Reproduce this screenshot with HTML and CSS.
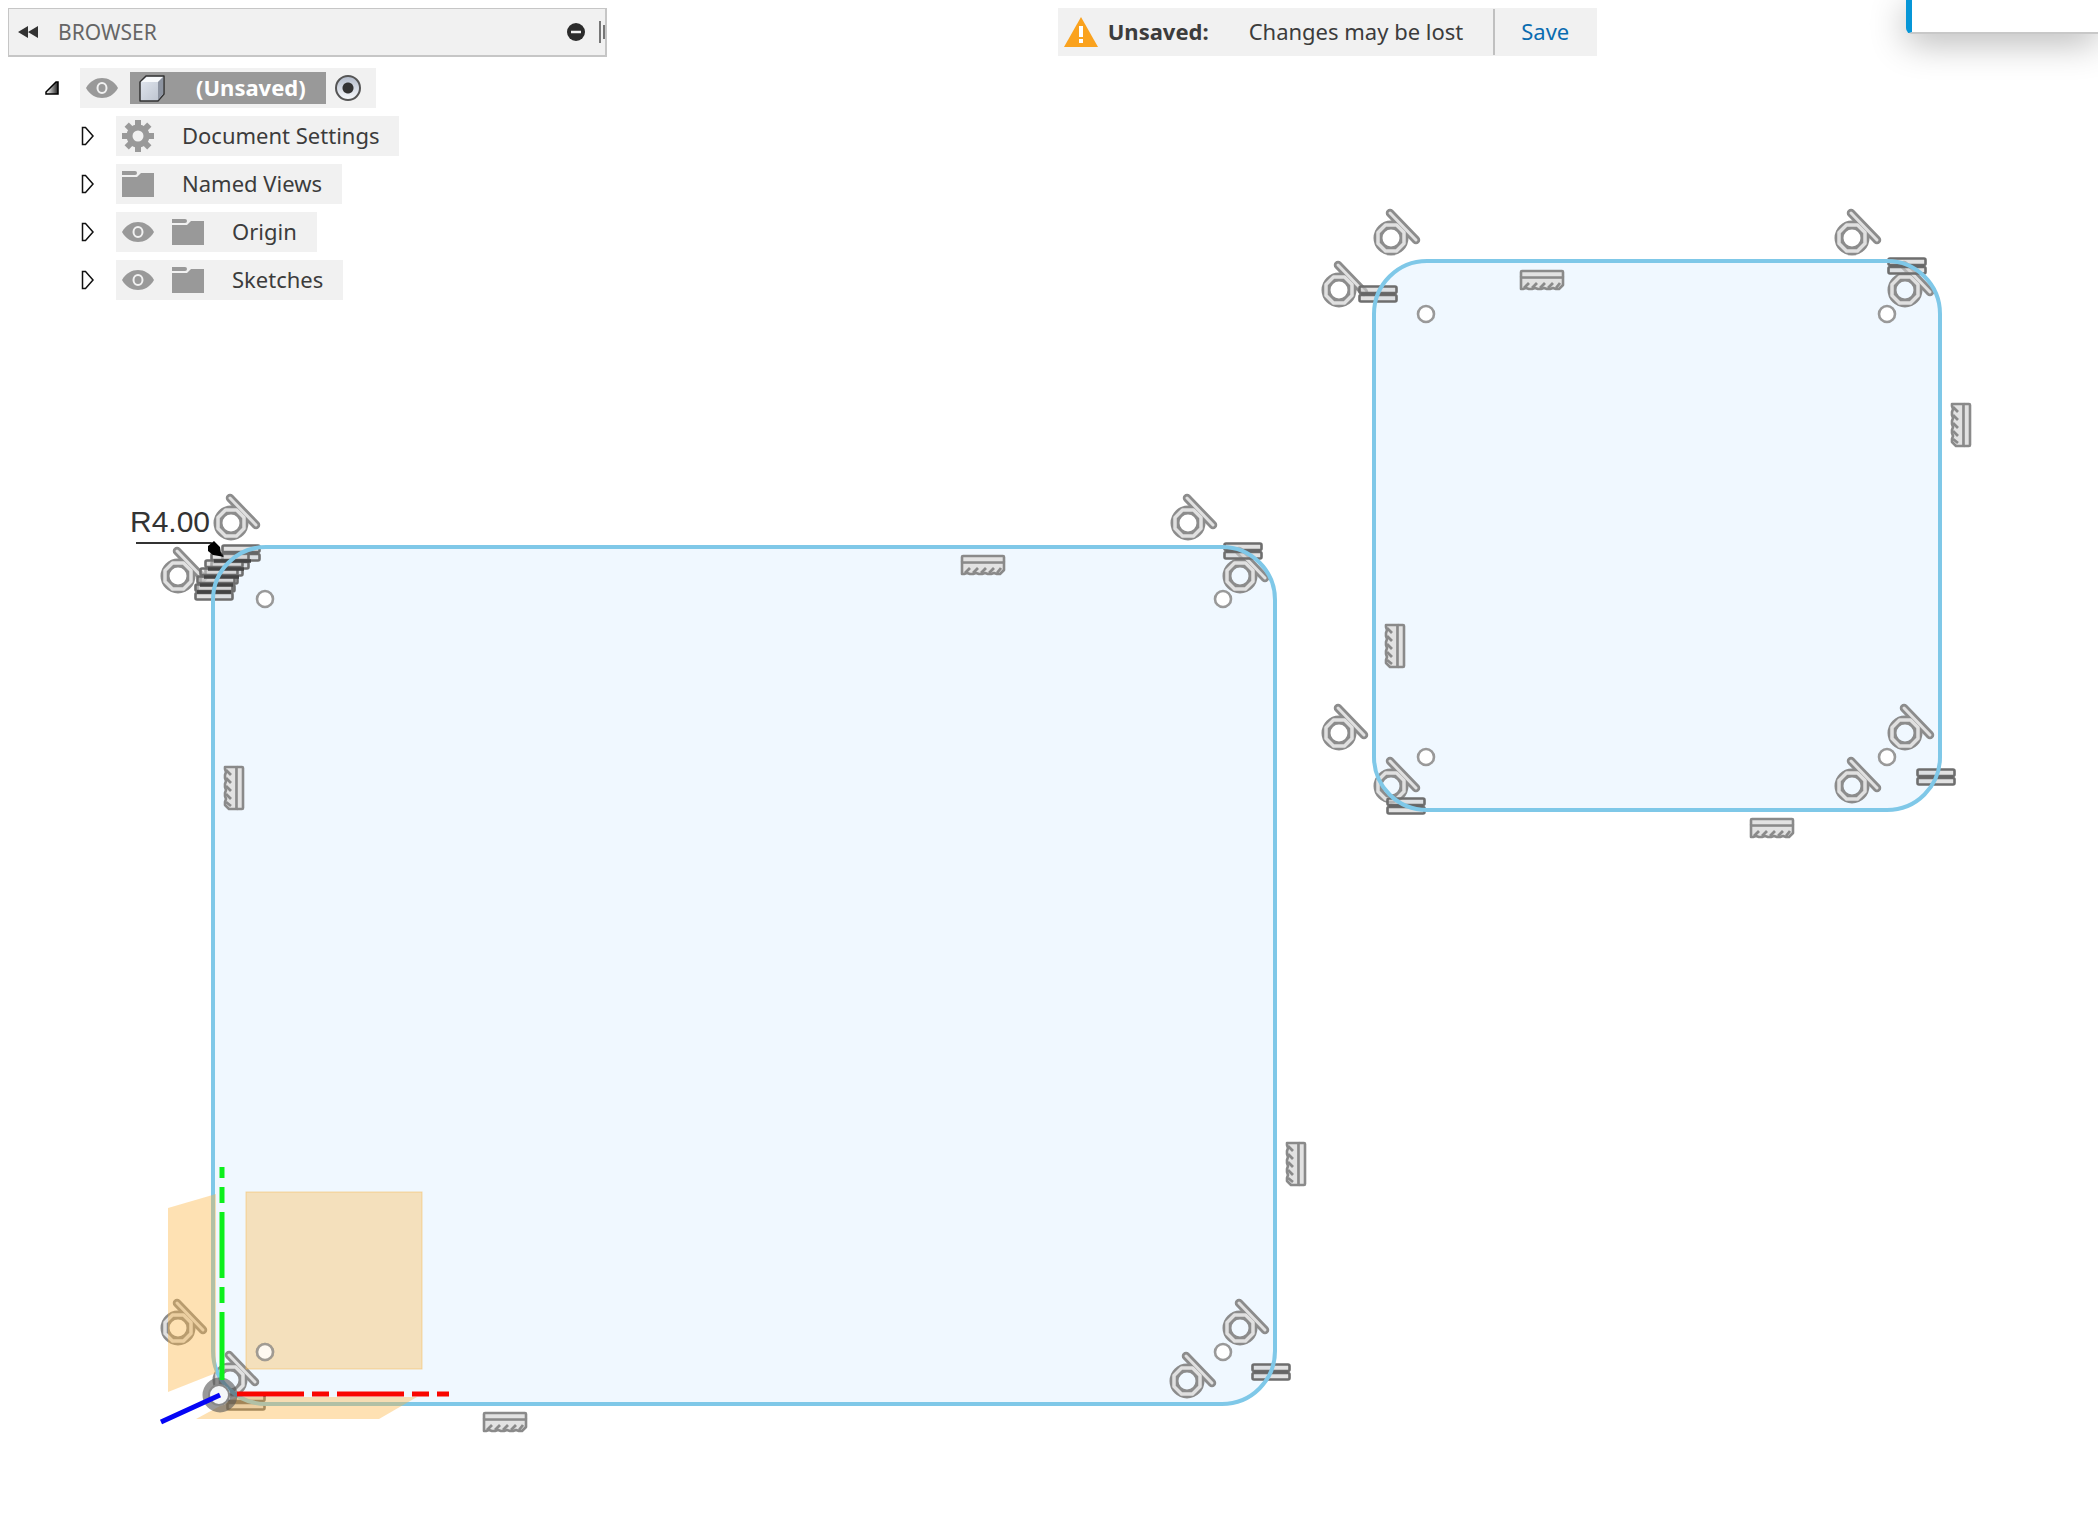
FILE: index.html
```html
<!DOCTYPE html>
<html lang="en">
<head>
<meta charset="utf-8">
<title>Sketch workspace</title>
<link rel="stylesheet" href="styles.css">
</head>
<body>
<svg class="symbols" aria-hidden="true">
  <defs>
    <linearGradient id="cube-face" x1="0" y1="0" x2="1" y2="1"><stop offset="0" stop-color="#e4e9f1"/><stop offset="1" stop-color="#b9c0cc"/></linearGradient>
    <linearGradient id="open-arrow" x1="0" y1="0" x2="1" y2="0"><stop offset="0.2" stop-color="#ddd"/><stop offset="1" stop-color="#222"/></linearGradient>
    <symbol id="eye" viewBox="0 0 32 20">
      <path d="M0 10C4 3 10 0 16 0s12 3 16 10c-4 7-10 10-16 10S4 17 0 10z" fill="#999"/>
      <ellipse cx="16" cy="10" rx="4.500" ry="5" fill="#999" stroke="#f1f1f1" stroke-width="2"/>
    </symbol>
    <symbol id="folder" viewBox="0 0 32 26">
      <path d="M0 0h13q2 0 2 2t-2 2H0zM0 6h15l4-4h13v24H0z" fill="#999"/>
    </symbol>
    <symbol id="gear" viewBox="-16 -16 32 32">
      <g fill="#999">
        <path d="M-3-16h6v32h-6z"/><path d="M-3-16h6v32h-6z" transform="rotate(45)"/>
        <path d="M-3-16h6v32h-6z" transform="rotate(90)"/><path d="M-3-16h6v32h-6z" transform="rotate(135)"/>
        <circle r="11.500"/>
      </g>
      <circle r="5.500" fill="#f1f1f1"/>
    </symbol>
    <symbol id="closed" viewBox="0 0 14 20"><path d="M1.500 1.500h3l7.500 8.500-7.500 8.500h-3z" fill="#fff" stroke="#111" stroke-width="1.500"/></symbol>
    <g id="tangent">
      <g fill="none" stroke="#8c8c8c" stroke-linecap="round" stroke-linejoin="round">
        <path d="M-5.500-13h11l7.500 7.500v11L5.500 13h-11L-13 5.500v-11z" stroke-width="6"/>
        <circle r="13" stroke-width="9"/><path d="M-1-25L25 2" stroke-width="8.500"/>
      </g>
      <g fill="none" stroke="#e0e0e0" stroke-linecap="round" stroke-linejoin="round">
        <path d="M-5.500-13h11l7.500 7.500v11L5.500 13h-11L-13 5.500v-11z" stroke-width="3.500"/><path d="M-1-25L25 2" stroke-width="3"/>
      </g>
    </g>
    <g id="equal" fill="#cfcfcf" fill-opacity="0.600" stroke="#6e6e6e" stroke-width="2.600">
      <rect x="-18.500" y="-7.500" width="37" height="6.500" rx="1.500"/>
      <rect x="-18.500" y="1" width="37" height="6.500" rx="1.500"/>
      <path d="M-17 0h34" stroke="#666"/>
    </g>
    <g id="axis-lock" fill="#e2e2e2" stroke="#8a8a8a" stroke-width="2.600" stroke-linejoin="round">
      <path d="M-21-3h42v8l-4 4h-3l-3-1-3 1h-3l-3-1-3 1h-3l-3-1-3 1h-3l-3-1-3 1h-2z"/>
      <path d="M-13 3l-5 5M-5 3l-5 5M3 3l-5 5M11 3L6 8M18 3l-4 5" stroke-width="2.800"/>
      <rect x="-21" y="-9" width="42" height="6.500" rx="1"/>
    </g>
    <circle id="point" r="8" fill="#fff" stroke="#999" stroke-width="2.600"/>
  </defs>
</svg>

<main class="workspace">
  <svg class="sketch" viewBox="0 0 2098 1516" preserveAspectRatio="xMinYMin meet" role="img" aria-label="Sketch with two rounded rectangles">
    <g fill="#f0f8ff">
      <rect x="213" y="547" width="1062" height="857" rx="53"/>
      <rect x="1374" y="261" width="566" height="549" rx="53"/>
    </g>
    <g>
      <use href="#tangent" x="231" y="523"/><use href="#tangent" x="178" y="576"/>
      <use href="#tangent" x="1188" y="523"/><use href="#tangent" x="1240" y="576"/>
      <use href="#tangent" x="1240" y="1328"/><use href="#tangent" x="1187" y="1381"/>
      <use href="#tangent" x="178" y="1328"/><use href="#tangent" x="230" y="1380"/>
      <use href="#tangent" x="1391" y="238"/><use href="#tangent" x="1339" y="290"/>
      <use href="#tangent" x="1852" y="238"/><use href="#tangent" x="1905" y="290"/>
      <use href="#tangent" x="1339" y="733"/><use href="#tangent" x="1391" y="786"/>
      <use href="#tangent" x="1905" y="733"/><use href="#tangent" x="1852" y="786"/>
    </g>
    <g>
      <use href="#equal" x="241" y="553"/><use href="#equal" x="230" y="561"/><use href="#equal" x="224" y="568"/>
      <use href="#equal" x="219" y="576"/><use href="#equal" x="216" y="584"/><use href="#equal" x="214" y="592"/>
      <path d="M214 561h37M208 569h36M204 577h35M200 585h33M197 592h34" stroke="#444" stroke-width="3.500"/>
      <use href="#equal" x="1243" y="551"/><use href="#equal" x="1271" y="1372"/><use href="#equal" x="246" y="1402"/>
      <use href="#equal" x="1378" y="294"/><use href="#equal" x="1907" y="266"/>
      <use href="#equal" x="1406" y="806"/><use href="#equal" x="1936" y="777"/>
    </g>
    <g>
      <use href="#axis-lock" x="983" y="565"/><use href="#axis-lock" x="505" y="1422"/>
      <use href="#axis-lock" x="1542" y="280"/><use href="#axis-lock" x="1772" y="828"/>
      <use href="#axis-lock" transform="translate(234 788) rotate(90)"/><use href="#axis-lock" transform="translate(1296 1164) rotate(90)"/>
      <use href="#axis-lock" transform="translate(1395 646) rotate(90)"/><use href="#axis-lock" transform="translate(1961 425) rotate(90)"/>
    </g>
    <g fill="none" stroke="#7fc8e8" stroke-width="4">
      <rect x="213" y="547" width="1062" height="857" rx="53"/>
      <rect x="1374" y="261" width="566" height="549" rx="53"/>
    </g>
    <g>
      <use href="#point" x="265" y="599"/><use href="#point" x="1223" y="599"/><use href="#point" x="265" y="1352"/><use href="#point" x="1223" y="1352"/>
      <use href="#point" x="1426" y="314"/><use href="#point" x="1887" y="314"/><use href="#point" x="1426" y="757"/><use href="#point" x="1887" y="757"/>
    </g>
    <g fill="#fcb441" fill-opacity="0.400">
      <path d="M168 1208l48-14v179l-48 19z"/>
      <path d="M236 1397h181l-38 22H196l24-13z"/>
      <rect x="246" y="1192" width="176" height="177" fill="#fabc58" stroke="#f5b955" stroke-opacity="0.500"/>
    </g>
    <use href="#point" x="265" y="1352" opacity="0.800"/>
    <circle cx="220" cy="1395" r="14" fill="none" stroke="#555" stroke-opacity="0.600" stroke-width="7"/>
    <path d="M222 1167v11M222 1187v16M222 1212v66M222 1287v16M222 1312v68" stroke="#0cf01c" stroke-width="5"/>
    <path d="M237 1394h67M312 1394h17M337 1394h67M412 1394h17M437 1394h12" stroke="#f90500" stroke-width="5"/>
    <circle cx="219" cy="1395" r="10" fill="#f4f6f8" stroke="#888" stroke-width="2"/>
    <path d="M161 1422l59-27" stroke="#0505f5" stroke-width="5"/>
    <text class="dimension" x="130" y="532">R4.00</text>
    <path d="M136 543h75l12 13" fill="none" stroke="#333" stroke-width="2"/>
    <path d="M208 546l6-5 6 6 1 7 3 3-5-1-6-1-5-4z"/>
  </svg>

  <div class="overlay">
    <section class="browser" aria-label="Browser">
      <header class="browser-head">
        <button class="icon-button" aria-label="Collapse panel"><svg width="20" height="12" viewBox="0 0 20 12"><path d="M10 0v12L0 6zM20 0v12L10 6z" fill="#333"/></svg></button>
        <h1 class="browser-title">BROWSER</h1>
        <button class="icon-button" aria-label="Minimize"><svg width="18" height="18" viewBox="0 0 18 18"><circle cx="9" cy="9" r="9" fill="#2b2b2b"/><path d="M4 9h10" stroke="#f1f1f1" stroke-width="2.500"/></svg></button>
        <svg class="grip" width="6" height="22" viewBox="0 0 6 22"><path d="M1 0v22M5 4v14" stroke="#777" stroke-width="2"/></svg>
      </header>
      <ul class="tree">
        <li class="node root">
          <button class="icon-button toggle" aria-label="Collapse document"><svg width="14" height="14" viewBox="0 0 14 14"><path d="M1 13v-2L11 1h2v12z" fill="url(#open-arrow)" stroke="#000" stroke-width="1.500"/></svg></button>
          <div class="entry">
            <button class="icon-button" aria-label="Toggle visibility"><svg width="32" height="20"><use href="#eye"/></svg></button>
            <span class="selected">
              <svg width="28" height="28" viewBox="0 0 28 28"><path d="M2 8l6-6h18v18l-6 7H2z" fill="url(#cube-face)" stroke="#333" stroke-width="1.500" stroke-linejoin="round"/><path d="M3 8l6-5h16l-5 5z" fill="#f8fafc"/><path d="M20 8l5-5v17l-5 6z" fill="#8d94a1"/></svg>
              <label class="root-name" for="active">(Unsaved)</label>
            </span>
            <input class="active-radio" type="radio" id="active" name="active" checked>
          </div>
        </li>
        <li class="node">
          <button class="icon-button toggle" aria-label="Expand Document Settings"><svg width="14" height="20"><use href="#closed"/></svg></button>
          <div class="entry"><svg width="32" height="32"><use href="#gear"/></svg><span class="label">Document Settings</span></div>
        </li>
        <li class="node">
          <button class="icon-button toggle" aria-label="Expand Named Views"><svg width="14" height="20"><use href="#closed"/></svg></button>
          <div class="entry"><svg width="32" height="26"><use href="#folder"/></svg><span class="label">Named Views</span></div>
        </li>
        <li class="node">
          <button class="icon-button toggle" aria-label="Expand Origin"><svg width="14" height="20"><use href="#closed"/></svg></button>
          <div class="entry"><button class="icon-button eye" aria-label="Toggle Origin"><svg width="32" height="20"><use href="#eye"/></svg></button><svg width="32" height="26"><use href="#folder"/></svg><span class="label">Origin</span></div>
        </li>
        <li class="node">
          <button class="icon-button toggle" aria-label="Expand Sketches"><svg width="14" height="20"><use href="#closed"/></svg></button>
          <div class="entry"><button class="icon-button eye" aria-label="Toggle Sketches"><svg width="32" height="20"><use href="#eye"/></svg></button><svg width="32" height="26"><use href="#folder"/></svg><span class="label">Sketches</span></div>
        </li>
      </ul>
    </section>

    <div class="notice-area">
      <div class="notice" role="status">
        <svg width="34" height="30" viewBox="0 0 34 30"><path d="M17 0l17 30H0z" fill="#faa21e"/><path d="M15 9h4v11h-4zM15 22h4v4h-4z" fill="#fff"/></svg>
        <strong class="notice-title">Unsaved:</strong>
        <span class="notice-text">Changes may be lost</span>
        <button class="save">Save</button>
      </div>
    </div>
    <div class="toast"></div>
  </div>
</main>
</body>
</html>
```
FILE: styles.css
```css
* {
  box-sizing: border-box;
}

body {
  margin: 0;
  background: #fff;
  color: #3c3c3c;
  font: 22px/32px "Noto Sans", "Open Sans", sans-serif;
}

button {
  padding: 0;
  border: 0;
  background: none;
  color: inherit;
  font: inherit;
  cursor: pointer;
}

svg {
  display: block;
  flex: none;
}

.symbols {
  position: absolute;
  width: 0;
  height: 0;
}

.workspace {
  display: grid;
  min-height: 100vh;
  overflow: hidden;
}

.sketch,
.overlay {
  grid-area: 1 / 1;
}

.sketch {
  width: 100%;
}

.dimension {
  fill: #333;
  font: 30px "Liberation Sans", Arial, sans-serif;
}

.overlay {
  position: relative;
  display: flex;
  align-items: flex-start;
  padding: 8px;
}

.browser {
  flex: 0 0 599px;
}

.browser-head {
  display: flex;
  align-items: center;
  height: 49px;
  padding-left: 9px;
  border: 1px solid #c6c6c6;
  border-right-width: 2px;
  border-bottom-width: 2px;
  background: #f1f1f1;
}

.browser-title {
  flex: 1;
  margin: 0 0 0 20px;
  color: #666;
  font-size: 21px;
  font-weight: 400;
}

.icon-button {
  display: flex;
  align-items: center;
}

.grip {
  margin-left: 14px;
}

.tree {
  display: flex;
  flex-direction: column;
  gap: 8px;
  margin: 11px 0 0;
  padding: 0;
  list-style: none;
}

.node {
  display: flex;
  align-items: center;
  padding-left: 73px;
}

.node.root {
  padding-left: 37px;
}

.toggle {
  width: 35px;
}

.entry {
  display: flex;
  align-items: center;
  height: 40px;
  padding: 0 20px 0 6px;
  background: #f1f1f1;
}

.root .entry {
  padding-right: 15px;
}

.eye {
  margin-right: 18px;
}

.label,
.root-name,
.notice-title,
.notice-text,
.save {
  padding-bottom: 2px;
}

.label {
  margin-left: 28px;
}

.selected {
  display: flex;
  align-items: center;
  gap: 30px;
  height: 32px;
  margin: 0 9px 0 12px;
  padding: 0 20px 0 8px;
  background: #999;
  color: #fff;
  font-weight: 700;
}

.active-radio {
  appearance: none;
  width: 26px;
  height: 26px;
  margin: 0;
  border: 2px solid #555;
  border-radius: 50%;
  background: radial-gradient(circle, #333 5px, transparent 6px), linear-gradient(#b4bccb, #f6f8fb);
}

.notice-area {
  display: flex;
  flex: 1;
  justify-content: center;
  padding-right: 42px;
}

.notice {
  display: flex;
  align-items: center;
  height: 48px;
  padding-left: 6px;
  background: #f1f1f1;
}

.notice-title {
  margin-left: 10px;
}

.notice-text {
  margin: 0 30px 0 40px;
}

.save {
  height: 46px;
  padding-left: 26px;
  padding-right: 28px;
  border-left: 2px solid #c0c0c0;
  color: #0a6cb0;
}

.toast {
  position: absolute;
  top: 0;
  right: 0;
  width: 192px;
  height: 34px;
  border-bottom: 2px solid #c8c8c8;
  border-left: 6px solid #0696d7;
  border-bottom-left-radius: 6px;
  background: #fff;
  box-shadow: 0 8px 36px rgba(0, 0, 0, 0.3);
}
```
